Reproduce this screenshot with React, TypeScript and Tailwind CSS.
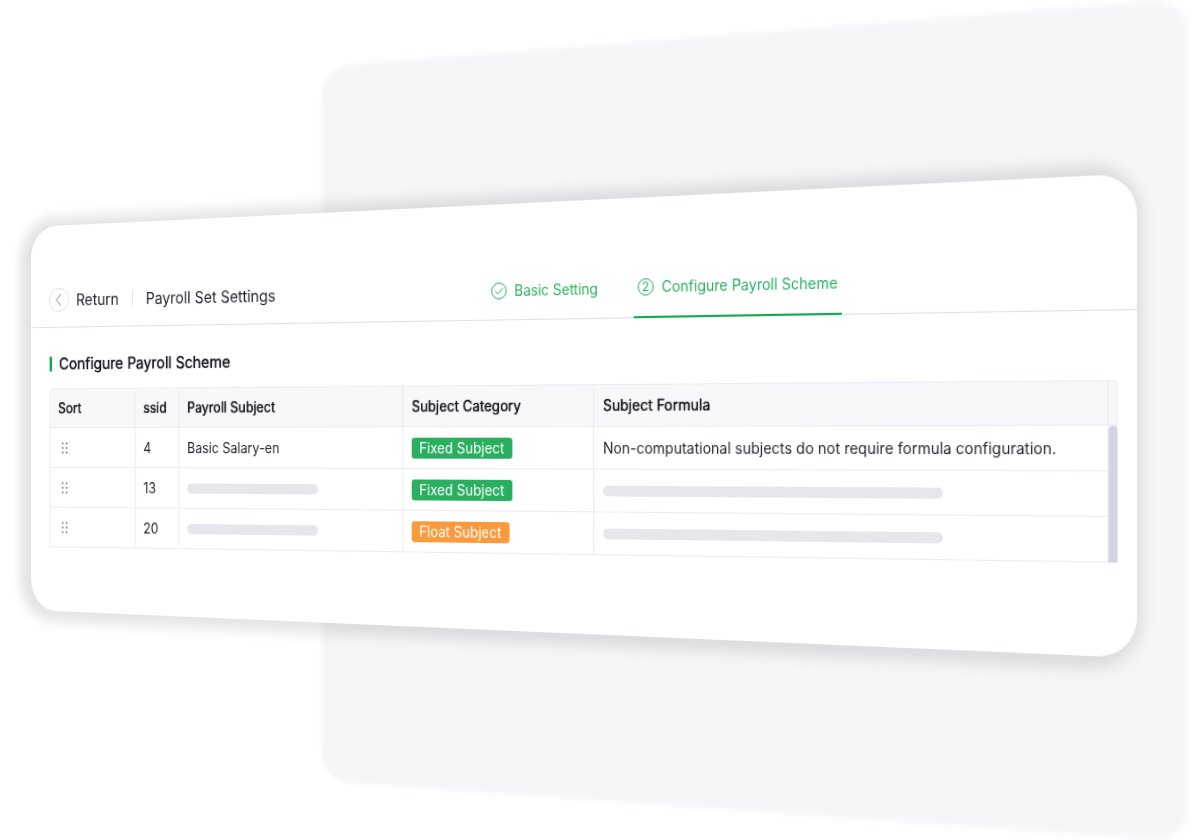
import type { ReactNode } from "react";

type Row = {
  ssid: number;
  subject?: string;
  category: "Fixed Subject" | "Float Subject";
  formula?: string;
};

const rows: Row[] = [
  {
    ssid: 4,
    subject: "Basic Salary-en",
    category: "Fixed Subject",
    formula: "Non-computational subjects do not require formula configuration.",
  },
  { ssid: 13, category: "Fixed Subject" },
  { ssid: 20, category: "Float Subject" },
];

function DragHandle() {
  return (
    <svg viewBox="0 0 8 12" className="h-3 w-2" fill="#5b606b" aria-hidden="true">
      {[1.4, 6, 10.6].map((y) => (
        <g key={y}>
          <rect x="0.6" y={y - 0.8} width="1.7" height="1.6" />
          <rect x="5" y={y - 0.8} width="1.7" height="1.6" />
        </g>
      ))}
    </svg>
  );
}

function CategoryTag({ category }: { category: Row["category"] }) {
  const color = category === "Fixed Subject" ? "bg-[#2aae60]" : "bg-[#fb9a3c]";
  return (
    <span className={`inline-flex h-5 items-center rounded-[3px] px-2 text-sm leading-5 text-white ${color}`}>
      {category}
    </span>
  );
}

function HeaderCell({ children }: { children: ReactNode }) {
  return (
    <th scope="col" className="h-10 border-r border-b border-[#eaecf5] pl-[9px] text-left font-normal">
      {children}
    </th>
  );
}

function Cell({ children }: { children: ReactNode }) {
  return <td className="h-10 border-r border-b border-[#eaecf5] pl-[9px] align-middle">{children}</td>;
}

function SubjectTable() {
  return (
    <table className="w-full table-fixed border-separate border-spacing-0 text-sm leading-5 text-[#1f232b]">
      <colgroup>
        <col className="w-[100px]" />
        <col className="w-[50px]" />
        <col className="w-[247px]" />
        <col className="w-[199px]" />
        <col />
        <col className="w-2" />
      </colgroup>
      <thead className="text-[#14171d] [text-shadow:0_0_1px_currentColor]">
        <tr className="[&>th]:border-t [&>th]:bg-[#f7f8fa] [&>th:first-child]:rounded-tl [&>th:first-child]:border-l [&>th:last-child]:rounded-tr">
          <HeaderCell>Sort</HeaderCell>
          <HeaderCell>ssid</HeaderCell>
          <HeaderCell>Payroll Subject</HeaderCell>
          <HeaderCell>Subject Category</HeaderCell>
          <HeaderCell>Subject Formula</HeaderCell>
          <th aria-hidden="true" className="border-r border-b border-[#eaecf5]" />
        </tr>
      </thead>
      <tbody>
        {rows.map((row, index) => (
          <tr key={row.ssid} className="[&>td:first-child]:border-l">
            <Cell>
              <span className="flex pl-1">
                <DragHandle />
              </span>
            </Cell>
            <Cell>{row.ssid}</Cell>
            <Cell>{row.subject ?? <div className="h-[10px] w-[146px] rounded-full bg-[#e6e7eb]" />}</Cell>
            <Cell>
              <span className="flex">
                <CategoryTag category={row.category} />
              </span>
            </Cell>
            <Cell>{row.formula ?? <div className="h-[10px] w-[330px] rounded-full bg-[#e6e7eb]" />}</Cell>
            {index === 0 && <td rowSpan={rows.length} className="rounded-t-full bg-[#d4d5e2]" />}
          </tr>
        ))}
      </tbody>
    </table>
  );
}

function Header() {
  return (
    <header className="grid h-14 grid-cols-[508px_1fr] border-b border-[#dde1ea] text-[#1f232b]">
      <div className="flex items-center gap-[15px] pl-[21px]">
        <button type="button" className="flex items-center gap-2 text-base leading-6">
          <span className="flex size-6 items-center justify-center rounded-full border border-[#dcdfe8]">
            <svg viewBox="0 0 16 16" className="size-4" fill="none" stroke="#9a9faa" strokeWidth="1.1" aria-hidden="true">
              <path d="M10.200 2.200 5 8l5.200 5.800" />
            </svg>
          </span>
          Return
        </button>
        <span className="h-4 w-px bg-[#dfe2ec]" />
        <h1 className="text-base leading-6">Payroll Set Settings</h1>
      </div>
      <nav aria-label="Steps" className="flex gap-8 text-sm leading-5 text-[#2aae60]">
        <button type="button" className="flex items-center gap-2 px-1">
          <svg viewBox="0 0 16 16" className="size-4" fill="none" stroke="currentColor" aria-hidden="true">
            <circle cx="8" cy="8" r="7.500" />
            <path d="m4.200 8.200 2.700 2.500 5.200-5.400" />
          </svg>
          Basic Setting
        </button>
        <button type="button" aria-current="step" className="-mb-px flex items-center gap-2 border-b-2 border-[#14a954] px-1">
          <span className="flex size-4 items-center justify-center rounded-full border border-current text-xs leading-none">
            2
          </span>
          Configure Payroll Scheme
        </button>
      </nav>
    </header>
  );
}

export default function App() {
  return (
    <main className="grid min-h-screen items-start overflow-hidden bg-white font-['Inter','Liberation_Sans',sans-serif]">
      <div className="mt-[67px] mr-[32px] ml-[322px] h-[714px] origin-[0_379px] rounded-[28px] bg-[#f4f6f8] blur-[2px] [grid-area:1/1] [transform:perspective(2762px)_rotateY(-30deg)]" />
      <section className="mt-[227px] mr-9 ml-[31px] grid [grid-area:1/1]">
        <div className="h-[383px] origin-[0_202px] rounded-[32px] bg-white shadow-[-5px_1px_13px_9px_rgba(0,0,0,0.11)] [grid-area:1/1] [transform:perspective(3440px)_rotateY(-39.5deg)]" />
        <div className="origin-[0_217px] pt-11 [grid-area:1/1] [transform:scale(0.99)_perspective(4383px)_rotateY(-31.5deg)]">
          <Header />
          <div className="pt-6 pr-[17px] pl-[22px]">
            <h2 className="mb-[13px] flex items-center gap-2 text-base leading-6 text-[#14171d] [text-shadow:0_0_1px_currentColor]">
              <span className="h-[15px] w-[3px] bg-[#14a954]" />
              Configure Payroll Scheme
            </h2>
            <SubjectTable />
          </div>
        </div>
      </section>
    </main>
  );
}
